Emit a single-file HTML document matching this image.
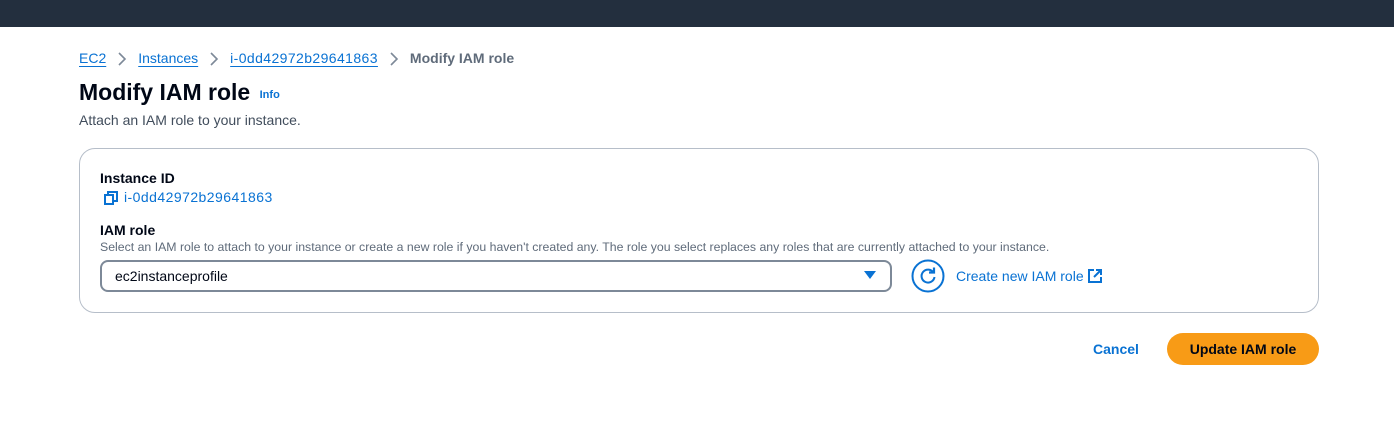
<!DOCTYPE html>
<html><head><style>
*{margin:0;padding:0;box-sizing:border-box}
body{width:1394px;height:426px;background:#fff;font-family:"Liberation Sans",sans-serif;color:#000716;position:relative;overflow:hidden}
.top{position:absolute;left:0;top:0;width:1394px;height:27px;background:#232f3e}
.a{position:absolute;white-space:nowrap}
.lnk{color:#0972d3;text-decoration:underline;text-underline-offset:3px}
.chev{display:inline-block;vertical-align:middle;margin:0 11px}
</style></head><body>
<div class="top"></div>
<div class="a" style="left:79px;top:49px;font-size:14px;line-height:18px">
<span class="lnk">EC2</span><svg class="chev" width="10" height="14" viewBox="0 0 10 14"><path d="M2 1l6 6-6 6" fill="none" stroke="#7d8998" stroke-width="1.6"/></svg><span class="lnk">Instances</span><svg class="chev" width="10" height="14" viewBox="0 0 10 14"><path d="M2 1l6 6-6 6" fill="none" stroke="#7d8998" stroke-width="1.6"/></svg><span class="lnk" style="letter-spacing:0.4px">i-0dd42972b29641863</span><svg class="chev" width="10" height="14" viewBox="0 0 10 14"><path d="M2 1l6 6-6 6" fill="none" stroke="#7d8998" stroke-width="1.6"/></svg><b style="color:#5f6b7a">Modify IAM role</b>
</div>
<div class="a" style="left:79px;top:78px;font-size:23px;font-weight:bold;line-height:28px">Modify IAM role <span style="font-size:11px;color:#0972d3;margin-left:3px;vertical-align:2px">Info</span></div>
<div class="a" style="left:79px;top:112px;font-size:14px;color:#414d5c">Attach an IAM role to your instance.</div>
<div class="a" style="left:79px;top:148px;width:1240px;height:165px;border:1px solid #b6bec9;border-radius:16px"></div>
<div class="a" style="left:100px;top:170px;font-size:14px;font-weight:bold">Instance ID</div>
<svg class="a" style="left:104px;top:191px" width="14" height="14" viewBox="0 0 14 14" fill="none" stroke="#0972d3" stroke-width="2"><rect x="1" y="4" width="8" height="9"/><path d="M4 4V1h9v9h-4"/></svg>
<div class="a" style="left:124px;top:189px;font-size:14px;color:#0972d3;letter-spacing:0.45px">i-0dd42972b29641863</div>
<div class="a" style="left:100px;top:222px;font-size:14px;font-weight:bold">IAM role</div>
<div class="a" style="left:100px;top:240px;font-size:12.3px;color:#5f6b7a">Select an IAM role to attach to your instance or create a new role if you haven't created any. The role you select replaces any roles that are currently attached to your instance.</div>
<div class="a" style="left:100px;top:260px;width:792px;height:32px;border:2px solid #7d8998;border-radius:8px"></div>
<div class="a" style="left:115px;top:268px;font-size:14px">ec2instanceprofile</div>
<svg class="a" style="left:864px;top:271px" width="12" height="9"><path d="M0 0h12L6 8z" fill="#0972d3"/></svg>
<svg class="a" style="left:911px;top:259px" width="34" height="34" viewBox="0 0 34 34" fill="none" stroke="#0972d3" stroke-width="2"><circle cx="17" cy="17" r="15.5"/><path d="M22.5 13.5A6.5 6.5 0 1 0 23.5 18"/><path d="M23 8.5v5h-5" stroke-width="2.2"/></svg>
<div class="a" style="left:956px;top:268px;font-size:14px;color:#0972d3">Create new IAM role</div>
<svg class="a" style="left:1088px;top:269px" width="14" height="14" viewBox="0 0 14 14" fill="none" stroke="#0972d3" stroke-width="2"><path d="M6 1H1v12h12V8"/><path d="M8 1h5v5M13 1L6 8"/></svg>
<div class="a" style="left:1093px;top:341px;font-size:14px;font-weight:bold;color:#0972d3">Cancel</div>
<div class="a" style="left:1167px;top:333px;width:152px;height:32px;border-radius:16px;background:#f89b16;font-size:14px;font-weight:bold;text-align:center;line-height:32px">Update IAM role</div>
</body></html>
